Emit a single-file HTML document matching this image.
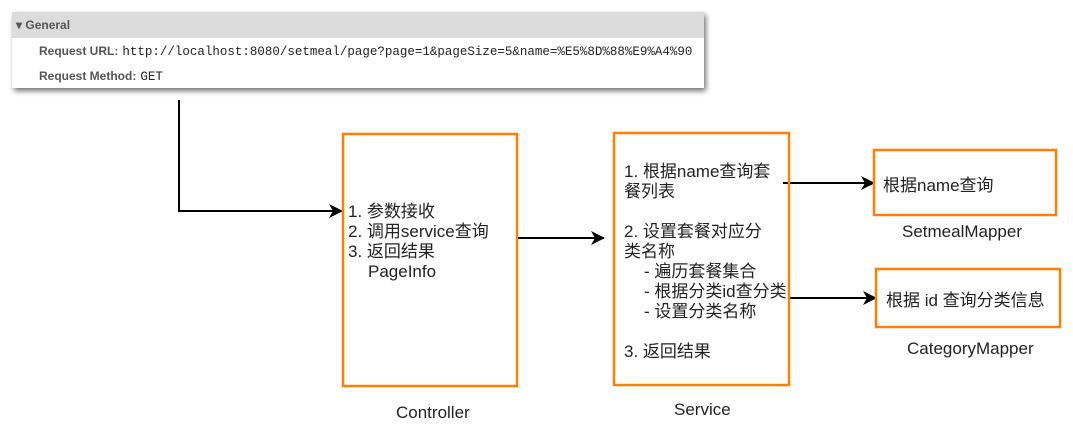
<!DOCTYPE html>
<html><head><meta charset="utf-8"><style>
body{margin:0;width:1073px;height:431px;background:#fff;overflow:hidden;position:relative;font-family:"Liberation Sans","Noto Sans CJK SC",sans-serif}
.panel{position:absolute;left:12px;top:12px;width:692px;height:76px;background:#fff;box-shadow:2px 3px 5px rgba(0,0,0,.55)}
.hd{height:26px;background:#dcdcdc;font:bold 12px "Liberation Sans",sans-serif;color:#555;line-height:26px;padding-left:4px}
.row{position:absolute;left:27px;font:bold 12px "Liberation Sans",sans-serif;color:#555}
.row span{font:12.5px "Liberation Mono",monospace;color:#222;font-weight:normal;margin-left:4px}
svg{position:absolute;left:0;top:0}
svg text{font-family:"Liberation Sans","Noto Sans CJK SC",sans-serif;font-size:17px;fill:#222}
</style></head><body>
<div class="panel"><div class="hd">▾ General</div>
<div class="row" style="top:32px">Request URL:<span>http://localhost:8080/setmeal/page?page=1&amp;pageSize=5&amp;name=%E5%8D%88%E9%A4%90</span></div>
<div class="row" style="top:57px">Request Method:<span>GET</span></div>
</div>
<svg width="1073" height="431">
<defs><marker id="a" markerWidth="14" markerHeight="14" refX="13" refY="7" orient="auto" markerUnits="userSpaceOnUse"><path d="M0,0 L14,7 L0,14 L4,7Z" fill="#000"/></marker></defs>
<g stroke="#000" stroke-width="2" fill="none">
<path d="M179,100 V211 H342" marker-end="url(#a)"/>
<path d="M517,238 H604" marker-end="url(#a)"/>
<path d="M783,183 H874" marker-end="url(#a)"/>
<path d="M789,298 H876" marker-end="url(#a)"/>
</g>
<g stroke="#ff8000" stroke-width="2.5" fill="none">
<rect x="343" y="134" width="174" height="252"/>
<rect x="614" y="133" width="175" height="252"/>
<rect x="874" y="150" width="182" height="65"/>
<rect x="876" y="269" width="184" height="58"/>
</g>
<text x="348" y="217">1. 参数接收</text>
<text x="348" y="237">2. 调用service查询</text>
<text x="348" y="257">3. 返回结果</text>
<text x="368" y="277">PageInfo</text>
<text x="624" y="177">1. 根据name查询套</text>
<text x="624" y="197">餐列表</text>
<text x="624" y="237">2. 设置套餐对应分</text>
<text x="624" y="257">类名称</text>
<text x="644" y="277">- 遍历套餐集合</text>
<text x="644" y="297">- 根据分类id查分类</text>
<text x="644" y="317">- 设置分类名称</text>
<text x="624" y="357">3. 返回结果</text>
<text x="883" y="191">根据name查询</text>
<text x="886" y="306">根据 id 查询分类信息</text>
<text x="396" y="418">Controller</text>
<text x="674" y="415">Service</text>
<text x="902" y="237">SetmealMapper</text>
<text x="907" y="354">CategoryMapper</text>
</svg>
</body></html>
